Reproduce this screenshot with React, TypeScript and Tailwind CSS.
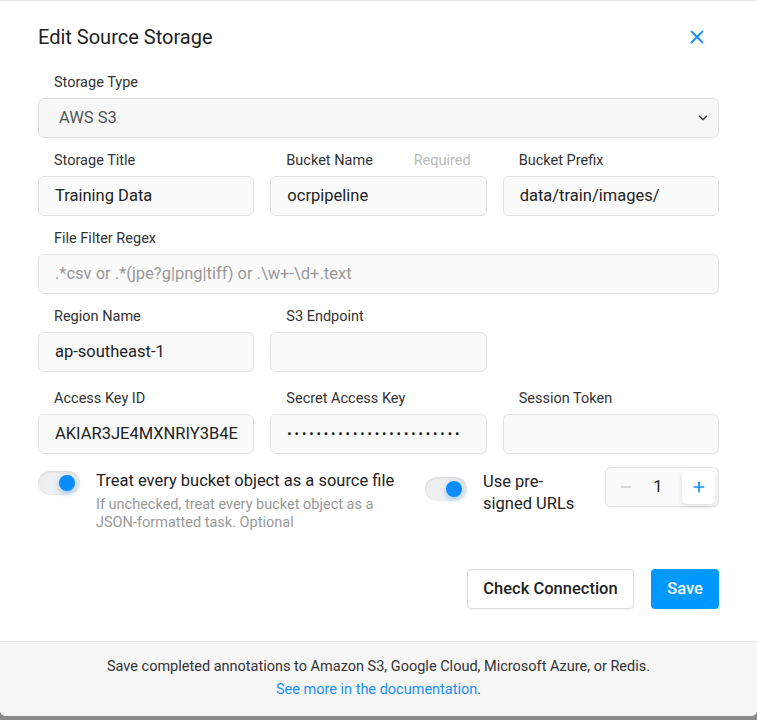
import { X, ChevronDown, Minus, Plus } from 'lucide-react'

const font = { fontFamily: 'Roboto, "Noto Sans", sans-serif' }

const Field = ({
  label,
  value,
  placeholder,
  extra,
  secret,
  className = '',
}: {
  label: string
  value?: string
  placeholder?: string
  extra?: string
  secret?: boolean
  className?: string
}) => (
  <div className={`flex flex-col ${className}`}>
    <div className="mb-[4px] flex h-[22px] items-center pl-4 text-[14.5px] leading-5 text-[#333]">
      <span>{label}</span>
      {extra && <span className="ml-auto pr-4 text-[#bbb]">{extra}</span>}
    </div>
    <div className="flex h-10 items-center overflow-hidden rounded-[6px] border border-[#e3e3e3] bg-[#fafafa] pl-4 pr-1 text-[16.5px] text-[#222]">
      {secret ? (
        <span className="whitespace-nowrap text-[13px] tracking-[2.9px] text-[#111]">{value}</span>
      ) : value ? (
        <span className="whitespace-nowrap">{value}</span>
      ) : (
        <span className="whitespace-nowrap text-[#999]">{placeholder}</span>
      )}
    </div>
  </div>
)

const Toggle = () => (
  <div className="relative h-6 w-[42px] shrink-0 rounded-full bg-[#f0f0f0] shadow-[inset_0_1px_3px_rgba(0,0,0,0.12)]">
    <div className="absolute right-[5px] top-1 h-4 w-4 rounded-full bg-[#0a8cff] shadow-[0_2px_6px_rgba(10,140,255,0.45)]" />
  </div>
)

export default function App() {
  return (
    <div className="h-[720px] w-[757px] bg-[#8a8a8a]" style={font}>
      <div className="flex h-[716px] flex-col overflow-hidden rounded-b-[6px] border-t border-[#e6e6e6] bg-white">
        <div className="flex-1 px-[38px] pt-[24px]">
          <div className="flex h-6 items-center justify-between">
            <h1 className="text-[20px] leading-6 text-[#222]">Edit Source Storage</h1>
            <X className="mr-[11px] h-[22px] w-[22px] text-[#1a8fff]" strokeWidth={2} />
          </div>

          <div className="mt-[23px] flex flex-col">
            <div className="mb-[4px] flex h-[22px] items-center pl-4 text-[14.5px] leading-5 text-[#333]">Storage Type</div>
            <div className="flex h-10 items-center rounded-[6px] border border-[#e0e0e0] bg-[#f7f7f7] pl-5 pr-2 text-[16.5px] text-[#555]">
              <span>AWS S3</span>
              <ChevronDown className="ml-auto h-3.5 w-3.5 text-[#444]" strokeWidth={2.5} />
            </div>
          </div>

          <div className="mt-3 grid grid-cols-3 gap-4">
            <Field label="Storage Title" value="Training Data" />
            <Field label="Bucket Name" value="ocrpipeline" extra="Required" />
            <Field label="Bucket Prefix" value="data/train/images/" />
          </div>

          <Field
            className="mt-3"
            label="File Filter Regex"
            placeholder=".*csv or .*(jpe?g|png|tiff) or .\w+-\d+.text"
          />

          <div className="mt-3 grid grid-cols-3 gap-4">
            <Field label="Region Name" value="ap-southeast-1" />
            <Field label="S3 Endpoint" />
          </div>

          <div className="mt-4 grid grid-cols-3 gap-4">
            <Field label="Access Key ID" value="AKIAR3JE4MXNRIY3B4E" />
            <Field label="Secret Access Key" value="••••••••••••••••••••••••" secret />
            <Field label="Session Token" />
          </div>

          <div className="mt-[13px] flex items-start">
            <div className="flex w-[387px] items-start pt-1">
              <Toggle />
              <div className="ml-4">
                <div className="whitespace-nowrap text-[16.5px] leading-[20px] text-[#222]">
                  Treat every bucket object as a source file
                </div>
                <div className="mt-[5px] w-[300px] text-[14.5px] leading-[18px] text-[#999]">
                  If unchecked, treat every bucket object as a JSON-formatted task. Optional
                </div>
              </div>
            </div>
            <div className="flex items-start pt-1">
              <div className="pt-[6px]">
                <Toggle />
              </div>
              <div className="ml-4 w-[100px] text-[16.5px] leading-[22px] text-[#222]">
                Use pre-
                <br />
                signed URLs
              </div>
            </div>
            <div className="ml-auto flex h-10 w-[114px] items-center rounded-[6px] border border-[#e3e3e3] bg-[#fafafa] pl-3 pr-[3px] shadow-[0_1px_2px_rgba(0,0,0,0.04)]">
              <Minus className="h-4 w-4 text-[#ccc]" strokeWidth={2} />
              <span className="flex-1 text-center text-[16.5px] text-[#222]">1</span>
              <div className="flex h-[33px] w-[33px] items-center justify-center rounded-[5px] bg-white shadow-[0_2px_5px_rgba(0,0,0,0.12)]">
                <Plus className="h-4 w-4 text-[#0a8cff]" strokeWidth={2.5} />
              </div>
            </div>
          </div>

          <div className="mt-[37px] flex justify-end gap-[17px]">
            <button className="h-10 w-[167px] rounded-[4px] border border-[#ddd] bg-white text-[16.5px] font-medium text-[#222] shadow-[0_1px_2px_rgba(0,0,0,0.05)]">
              Check Connection
            </button>
            <button className="h-10 w-[68px] rounded-[4px] bg-[#0099ff] text-[16.5px] font-medium text-white">
              Save
            </button>
          </div>
        </div>

        <div className="flex h-[75px] flex-col items-center justify-center border-t border-[#e4e4e4] bg-[#f6f6f6] pb-[2px] text-[14.5px] leading-[23px] text-[#333]">
          <div>Save completed annotations to Amazon S3, Google Cloud, Microsoft Azure, or Redis.</div>
          <div>
            <span className="text-[#1a8fff]">See more in the documentation</span>.
          </div>
        </div>
      </div>
    </div>
  )
}
